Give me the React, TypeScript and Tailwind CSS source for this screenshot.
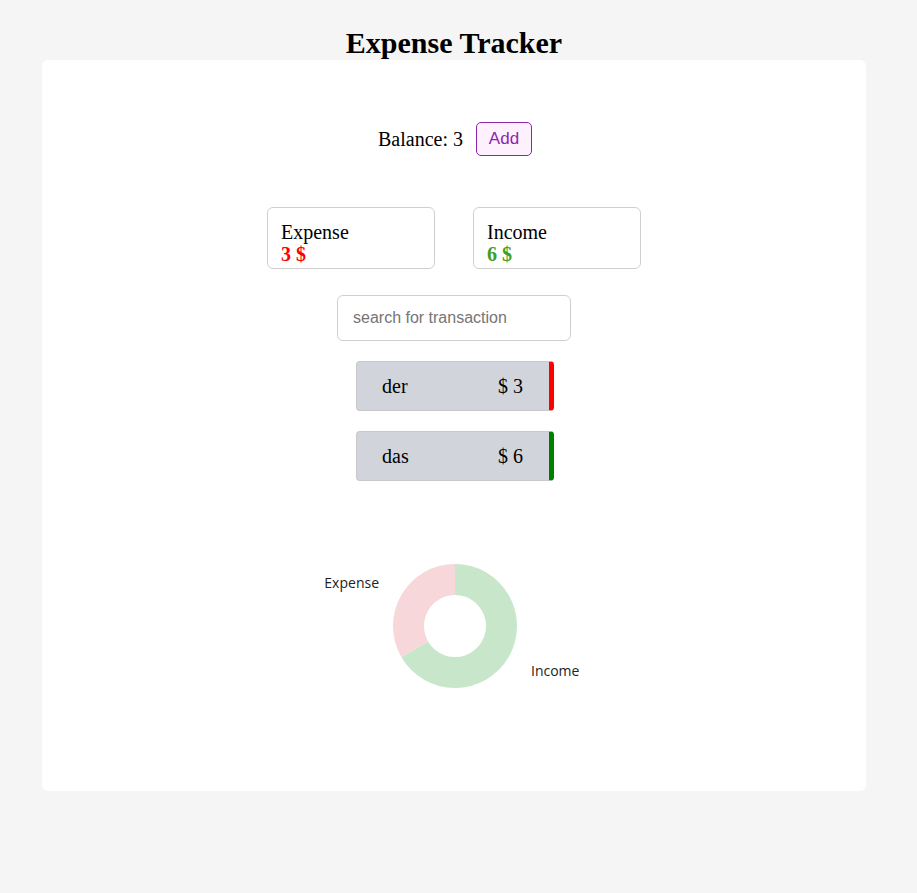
import { useState } from "react";

interface Transaction {
  id: number;
  text: string;
  amount: number;
  type: "expense" | "income";
}

const serif = "font-['Liberation_Serif','Times_New_Roman',serif]";
const sans = "font-['Liberation_Sans',Arial,sans-serif]";

function DonutChart({ expense, income }: { expense: number; income: number }) {
  // center (150,100), outer 62, inner 31 — income starts at 12 o'clock, clockwise
  const cx = 150;
  const cy = 100;
  const R = 62;
  const r = 31;
  const total = expense + income || 1;
  const end = -Math.PI / 2 + (income / total) * Math.PI * 2;
  const ox = cx + R * Math.cos(end);
  const oy = cy + R * Math.sin(end);
  const ix = cx + r * Math.cos(end);
  const iy = cy + r * Math.sin(end);
  const big = income / total > 0.5 ? 1 : 0;
  const bigE = expense / total > 0.5 ? 1 : 0;

  return (
    <svg width={300} height={200} viewBox="0 0 300 200">
      <path
        d={`M${cx},${cy - R} A${R},${R} 0 ${big} 1 ${ox},${oy} L${ix},${iy} A${r},${r} 0 ${big} 0 ${cx},${cy - r} Z`}
        fill="#c8e6c9"
      />
      <path
        d={`M${ox},${oy} A${R},${R} 0 ${bigE} 1 ${cx},${cy - R} L${cx},${cy - r} A${r},${r} 0 ${bigE} 0 ${ix},${iy} Z`}
        fill="#f8d7da"
      />
      <text x={74} y={62} textAnchor="end" fontSize={14} fill="#222" fontFamily="'Open Sans', sans-serif">
        Expense
      </text>
      <text x={226} y={150} fontSize={14} fill="#222" fontFamily="'Open Sans', sans-serif">
        Income
      </text>
    </svg>
  );
}

export default function App() {
  const [search, setSearch] = useState("");
  const transactions: Transaction[] = [
    { id: 1, text: "der", amount: 3, type: "expense" },
    { id: 2, text: "das", amount: 6, type: "income" },
  ];

  const expense = transactions.filter((t) => t.type === "expense").reduce((s, t) => s + t.amount, 0);
  const income = transactions.filter((t) => t.type === "income").reduce((s, t) => s + t.amount, 0);
  const shown = transactions.filter((t) => t.text.toLowerCase().includes(search.toLowerCase()));

  return (
    <div className={`min-h-[893px] bg-[#f5f5f5] pt-[28px] text-black ${serif}`}>
      <div className="w-[908px]">
        <h1 className="text-center text-[30px] leading-[30px] font-bold">Expense Tracker</h1>

        <div className="mx-[42px] mt-[2px] flex h-[731px] flex-col items-center rounded-md bg-white pt-[62px]">
          {/* Balance */}
          <div className="flex items-center gap-[13px] pl-[2px]">
            <span className="text-[20px] leading-[23px]">Balance: {income - expense}</span>
            <button
              className={`h-[34px] w-[56px] rounded-[5px] border border-[#8e24aa] bg-[#fdf1fe] text-[17px] text-[#8e24aa] ${sans}`}
            >
              Add
            </button>
          </div>

          {/* Summary cards */}
          <div className="mt-[51px] flex gap-[38px]">
            <div className="h-[62px] w-[168px] rounded-md border border-[#cfcfcf] pt-[13px] pl-[13px] text-[20px] leading-[22px]">
              <div>Expense</div>
              <div className="font-bold text-[red]">{expense} $</div>
            </div>
            <div className="h-[62px] w-[168px] rounded-md border border-[#cfcfcf] pt-[13px] pl-[13px] text-[20px] leading-[22px]">
              <div>Income</div>
              <div className="font-bold text-[#3f9f22]">{income} $</div>
            </div>
          </div>

          {/* Search */}
          <input
            value={search}
            onChange={(e) => setSearch(e.target.value)}
            placeholder="search for transaction"
            className={`mt-[26px] h-[46px] w-[234px] rounded-md border border-[#cfcfcf] px-[15px] text-[16px] placeholder-[#757575] outline-none ${sans}`}
          />

          {/* Transactions */}
          <div className="mt-[20px] flex flex-col gap-[20px] pl-[2px]">
            {shown.map((t) => (
              <div
                key={t.id}
                className={`flex h-[50px] w-[198px] items-center justify-between rounded-[4px] border border-[#c9c9c9] border-r-[5px] bg-[#d1d4da] pr-[26px] pl-[25px] text-[20px] ${
                  t.type === "expense" ? "border-r-[red]" : "border-r-[green]"
                }`}
              >
                <span>{t.text}</span>
                <span>$ {t.amount}</span>
              </div>
            ))}
          </div>

          {/* Chart */}
          <div className="mt-[45px] pl-[2px]">
            <DonutChart expense={expense} income={income} />
          </div>
        </div>
      </div>
    </div>
  );
}
